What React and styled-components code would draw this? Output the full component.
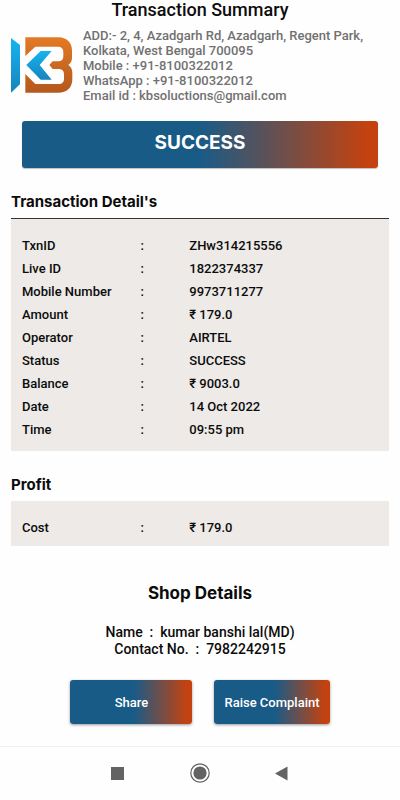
import React from "react";
import styled, { createGlobalStyle } from "styled-components";

const GlobalStyle = createGlobalStyle`
  * {
    box-sizing: border-box;
  }

  body {
    margin: 0;
    background: #fefefe;
    color: #0c0c0c;
    font-family: Roboto, "Liberation Sans", sans-serif;
    font-weight: 500;
  }
`;

const Screen = styled.div`
  min-height: 100vh;
  display: flex;
  flex-direction: column;
`;

const Content = styled.main`
  flex: 1;
  padding: 0 11px;
`;

const Title = styled.h1`
  margin: 0;
  text-align: center;
  font-size: 18px;
  line-height: 20px;
  font-weight: 500;
`;

const Company = styled.header`
  display: flex;
  align-items: flex-start;
  gap: 10px;
  margin-top: 8px;
`;

const LogoImage = styled.svg`
  flex: none;
  width: 62px;
  height: 56px;
  margin-top: 9px;
`;

const Address = styled.address`
  font-style: normal;
  font-size: 13px;
  line-height: 15px;
  color: #717171;
`;

const Banner = styled.div`
  margin: 18px 11px 0;
  padding: 10px 0 13px;
  border-radius: 3px;
  background: linear-gradient(90deg, #195b87 50%, #c4420f 97%);
  box-shadow: 0 1px 1px rgba(0, 0, 0, 0.25);
  color: #fff;
  text-align: center;
  font-family: Inter, sans-serif;
  font-size: 19px;
  line-height: 24px;
  font-weight: 700;
`;

const SectionTitle = styled.h2`
  margin: 24px 0 6px;
  font-family: Inter, sans-serif;
  font-size: 15px;
  line-height: 20px;
  font-weight: 700;
`;

const Panel = styled.div`
  padding: 15px 11px ${(props) => (props.$lined ? "10px" : "7px")};
  border-top: ${(props) => (props.$lined ? "1px solid #333" : "none")};
  background: #edeae7;
`;

const Table = styled.table`
  width: 100%;
  table-layout: fixed;
  border-collapse: collapse;
  font-size: 13px;
  line-height: 23px;
`;

const Label = styled.th`
  width: 33%;
  padding: 0;
  text-align: left;
  font-weight: 500;
`;

const Colon = styled.td`
  width: 14%;
  padding: 0 1px;
`;

const Value = styled.td`
  padding: 0;
`;

const Shop = styled.section`
  margin-top: 35px;
  text-align: center;
`;

const ShopTitle = styled.h2`
  margin: 0 0 19px;
  font-family: Inter, sans-serif;
  font-size: 17px;
  line-height: 24px;
  font-weight: 700;
`;

const ShopLine = styled.p`
  margin: 0;
  font-size: 14px;
  line-height: 17px;
  white-space: pre;
`;

const Actions = styled.div`
  display: flex;
  justify-content: center;
  gap: 22px;
  margin: 22px 0;
`;

const ActionButton = styled.button`
  min-width: ${(props) => (props.$wide ? "122px" : "0")};
  height: 44px;
  padding: 0 10px;
  border: none;
  border-radius: 3px;
  background: linear-gradient(90deg, #195b87 52%, #c4420f 96%);
  box-shadow: 0 1px 3px rgba(0, 0, 0, 0.4);
  color: #fff;
  font: 500 13px Roboto, sans-serif;
  cursor: pointer;
`;

const NavBar = styled.nav`
  display: flex;
  justify-content: center;
  gap: 58px;
  padding: 14px 0 15px;
  border-top: 1px solid #f0f0f0;
`;

const NavButton = styled.button`
  display: flex;
  padding: 0;
  border: none;
  background: none;
  color: #636363;
  cursor: pointer;
`;

const details = [
  ["TxnID", "ZHw314215556"],
  ["Live ID", "1822374337"],
  ["Mobile Number", "9973711277"],
  ["Amount", "₹ 179.0"],
  ["Operator", "AIRTEL"],
  ["Status", "SUCCESS"],
  ["Balance", "₹ 9003.0"],
  ["Date", "14 Oct 2022"],
  ["Time", "09:55 pm"],
];

const profit = [["Cost", "₹ 179.0"]];

export default function App() {
  return (
    <>
      <GlobalStyle />
      <Screen>
        <Content>
          <Title>Transaction Summary</Title>
          <Company>
            <Logo />
            <Address>
              ADD:- 2, 4, Azadgarh Rd, Azadgarh, Regent Park,
              <br />
              Kolkata, West Bengal 700095
              <br />
              Mobile : +91-8100322012
              <br />
              WhatsApp : +91-8100322012
              <br />
              Email id : kbsoluctions@gmail.com
            </Address>
          </Company>
          <Banner>SUCCESS</Banner>

          <SectionTitle>Transaction Detail's</SectionTitle>
          <Panel $lined>
            <DetailTable rows={details} />
          </Panel>

          <SectionTitle>Profit</SectionTitle>
          <Panel>
            <DetailTable rows={profit} />
          </Panel>

          <Shop>
            <ShopTitle>Shop Details</ShopTitle>
            <ShopLine>{"Name  :  kumar banshi lal(MD)"}</ShopLine>
            <ShopLine>{"Contact No.  :  7982242915"}</ShopLine>
          </Shop>
          <Actions>
            <ActionButton $wide>Share</ActionButton>
            <ActionButton>Raise Complaint</ActionButton>
          </Actions>
        </Content>
        <SystemNav />
      </Screen>
    </>
  );
}

function DetailTable({ rows }) {
  return (
    <Table>
      <tbody>
        {rows.map(([label, value]) => (
          <tr key={label}>
            <Label scope="row">{label}</Label>
            <Colon>:</Colon>
            <Value>{value}</Value>
          </tr>
        ))}
      </tbody>
    </Table>
  );
}

function Logo() {
  return (
    <LogoImage viewBox="33 110 186 168" aria-hidden="true">
      <defs>
        <linearGradient id="orange" x1="0" y1="0" x2="0" y2="1">
          <stop offset="0" stopColor="#e37a25" />
          <stop offset="1" stopColor="#b4581c" />
        </linearGradient>
        <linearGradient id="blue" x1="0" y1="0" x2="0" y2="1">
          <stop offset="0" stopColor="#16b4f0" />
          <stop offset="1" stopColor="#1784bd" />
        </linearGradient>
      </defs>
      <path
        fill="url(#orange)"
        d="M76 111H176C202 112 216 128 216 150V172C216 182 212 188 205 194C213 200 217 207 217 218V236C217 262 201 277 174 277H76Z"
      />
      <path
        fill="#fefefe"
        d="M75 168L106 139H176C186 140 190 146 190 155V168C190 178 185 183 175 183H158L148 194L158 206H178C187 207 192 212 192 221V235C192 245 186 251 176 251H106L75 220Z"
      />
      <path fill="url(#blue)" d="M33 113L60 134V252L33 277Z" />
      <path fill="url(#blue)" d="M122 152H155L119 194L155 238H122L79 194Z" />
    </LogoImage>
  );
}

function SystemNav() {
  return (
    <NavBar>
      <NavButton aria-label="Recent apps">
        <svg width="24" height="24" viewBox="0 0 24 24">
          <rect x="5" y="6" width="13" height="13" fill="currentColor" />
        </svg>
      </NavButton>
      <NavButton aria-label="Home">
        <svg width="24" height="24" viewBox="0 0 24 24">
          <circle cx="12" cy="12" r="9.2" fill="none" stroke="currentColor" strokeWidth="1.2" />
          <circle cx="12" cy="12" r="6.6" fill="currentColor" />
        </svg>
      </NavButton>
      <NavButton aria-label="Back">
        <svg width="24" height="24" viewBox="0 0 24 24">
          <path d="M17.5 5.5V19.5L5 12.5Z" fill="currentColor" />
        </svg>
      </NavButton>
    </NavBar>
  );
}
